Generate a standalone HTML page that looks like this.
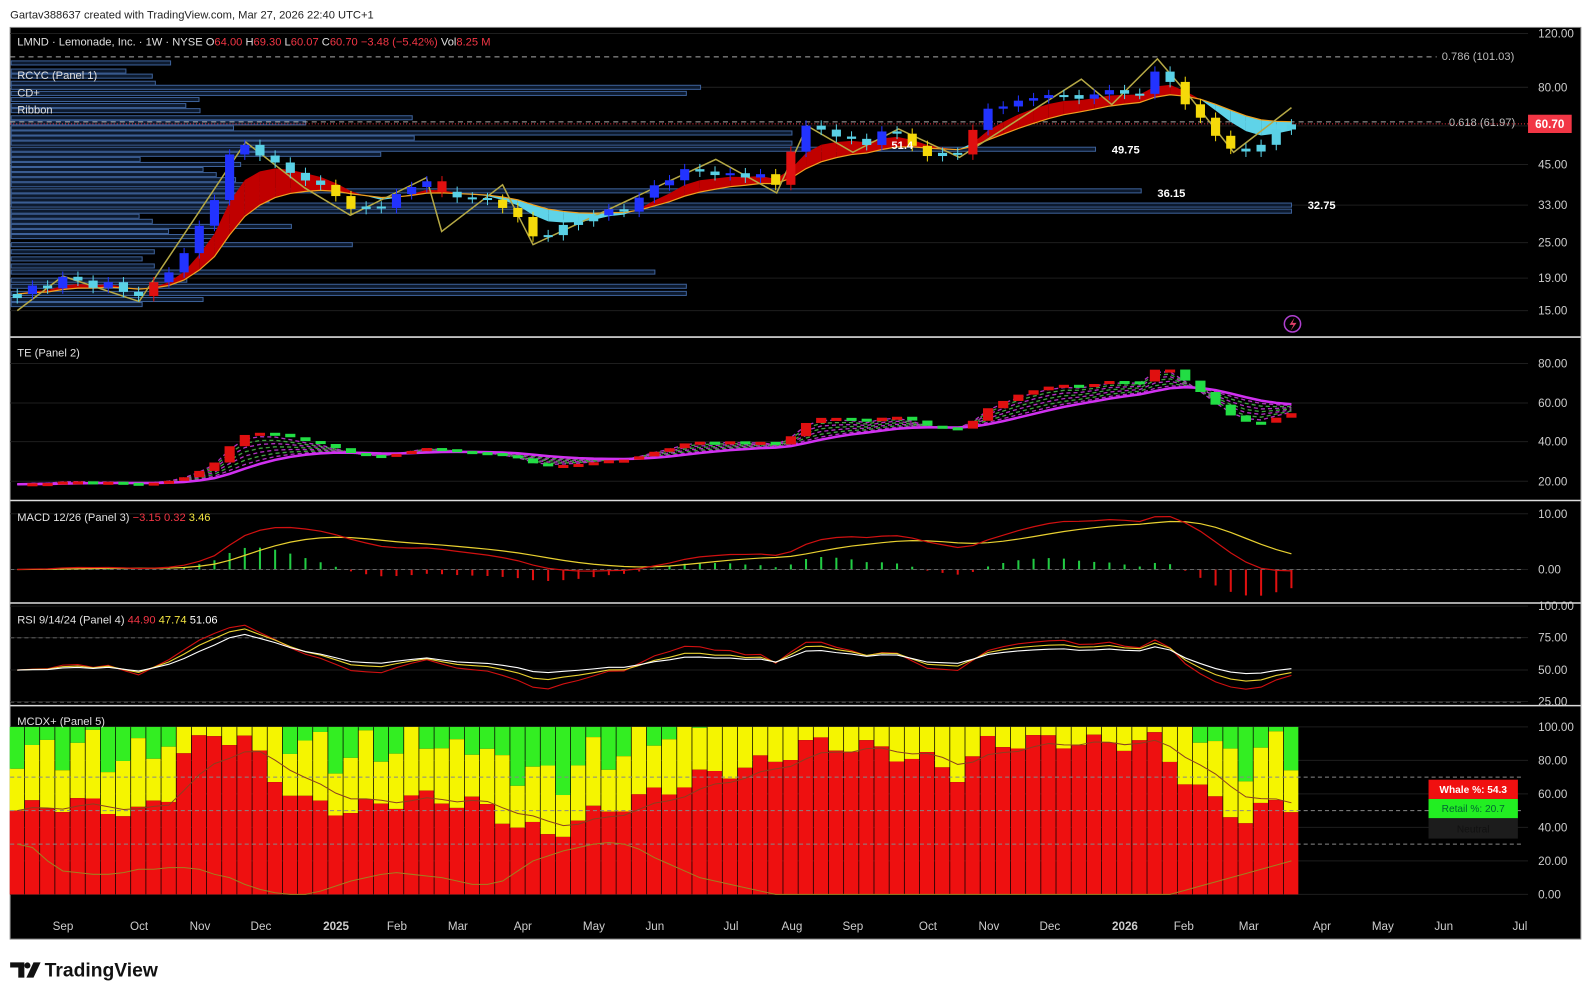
<!DOCTYPE html>
<html><head><meta charset="utf-8"><style>
html,body{margin:0;padding:0;background:#fff;width:1592px;height:1000px;overflow:hidden}
svg{display:block}
text{font-family:"Liberation Sans","DejaVu Sans",sans-serif}
</style></head><body>
<svg id="s" width="1592" height="1000" viewBox="0 0 1568 985" preserveAspectRatio="none" xmlns="http://www.w3.org/2000/svg">
<rect x="0" y="0" width="1568" height="985" fill="#fff"/>
<text x="10" y="18" font-size="11" fill="#222">Gartav388637 created with TradingView.com, Mar 27, 2026 22:40 UTC+1</text>
<rect x="10" y="27" width="1547" height="898" fill="#000" stroke="#888" stroke-width="1"/>
<g id="grid" stroke="#1e1e1e" stroke-width="1"></g>
<g id="vp"></g>
<g id="draw"></g>
<g stroke="#ddd" stroke-width="1.5">
<line x1="10" y1="332" x2="1557" y2="332"/><line x1="10" y1="493" x2="1557" y2="493"/>
<line x1="10" y1="594" x2="1557" y2="594"/><line x1="10" y1="695" x2="1557" y2="695"/>
</g>
<g font-size="11" fill="#e0e0e0">
<text x="17" y="45">LMND · Lemonade, Inc. · 1W · NYSE <tspan>O</tspan><tspan fill="#f23645">64.00</tspan> H<tspan fill="#f23645">69.30</tspan> L<tspan fill="#f23645">60.07</tspan> C<tspan fill="#f23645">60.70</tspan> <tspan fill="#f23645">−3.48 (−5.42%)</tspan> Vol<tspan fill="#f23645">8.25 M</tspan></text>
<text x="17" y="78">RCYC (Panel 1)</text>
<text x="17" y="95">CD+</text>
<text x="17" y="112">Ribbon</text>
<text x="17" y="351">TE  (Panel 2)</text>
<text x="17" y="513">MACD 12/26 (Panel 3) <tspan fill="#f23645">−3.15</tspan> <tspan fill="#f23645">0.32</tspan> <tspan fill="#f5e642">3.46</tspan></text>
<text x="17" y="614">RSI 9/14/24 (Panel 4) <tspan fill="#f23645">44.90</tspan> <tspan fill="#f5e642">47.74</tspan> <tspan fill="#fff">51.06</tspan></text>
<text x="17" y="714">MCDX+ (Panel 5)</text>
</g>
<g font-size="11" fill="#fff" font-weight="bold">
<text x="878" y="147">51.4</text><text x="1095" y="151">49.75</text><text x="1140" y="194">36.15</text><text x="1288" y="206">32.75</text>
</g>
<g font-size="11" fill="#bbb">
<text x="1420" y="59">0.786 (101.03)</text><text x="1427" y="124">0.618 (61.97)</text>
</g>
<rect x="1505" y="113" width="43" height="18" fill="#f23645"/>
<text x="1512" y="126" font-size="11.5" fill="#fff" font-weight="bold">60.70</text>
<g font-size="11.5" fill="#ccc" id="axis">
<text x="1515" y="37">120.00</text><text x="1515" y="90">80.00</text><text x="1515" y="166">45.00</text><text x="1515" y="206">33.00</text><text x="1515" y="243">25.00</text><text x="1515" y="278">19.00</text><text x="1515" y="310">15.00</text>
<text x="1515" y="362">80.00</text><text x="1515" y="401">60.00</text><text x="1515" y="439">40.00</text><text x="1515" y="478">20.00</text>
<text x="1515" y="510">10.00</text><text x="1515" y="565">0.00</text>
<text x="1515" y="601">100.00</text><text x="1515" y="632">75.00</text><text x="1515" y="664">50.00</text><text x="1515" y="695">25.00</text>
<text x="1515" y="720">100.00</text><text x="1515" y="753">80.00</text><text x="1515" y="786">60.00</text><text x="1515" y="819">40.00</text><text x="1515" y="852">20.00</text><text x="1515" y="885">0.00</text>
</g>
<g font-size="11.5" fill="#ccc" text-anchor="middle">
<text x="62" y="916">Sep</text><text x="137" y="916">Oct</text><text x="197" y="916">Nov</text><text x="257" y="916">Dec</text><text x="331" y="916" font-weight="bold">2025</text><text x="391" y="916">Feb</text><text x="451" y="916">Mar</text><text x="515" y="916">Apr</text><text x="585" y="916">May</text><text x="645" y="916">Jun</text><text x="720" y="916">Jul</text><text x="780" y="916">Aug</text><text x="840" y="916">Sep</text><text x="914" y="916">Oct</text><text x="974" y="916">Nov</text><text x="1034" y="916">Dec</text><text x="1108" y="916" font-weight="bold">2026</text><text x="1166" y="916">Feb</text><text x="1230" y="916">Mar</text><text x="1302" y="916">Apr</text><text x="1362" y="916">May</text><text x="1422" y="916">Jun</text><text x="1497" y="916">Jul</text>
</g>
<rect x="1407" y="768" width="88" height="19" fill="#f01010"/>
<rect x="1407" y="787" width="88" height="19" fill="#22ee22"/>
<rect x="1407" y="806" width="88" height="20" fill="#1c1c1c"/>
<text x="1451" y="781" font-size="10" fill="#fff" font-weight="bold" text-anchor="middle">Whale %: 54.3</text>
<text x="1451" y="800" font-size="10" fill="#063" text-anchor="middle">Retail %: 20.7</text>
<text x="1451" y="820" font-size="10" fill="#111" text-anchor="middle">Neutral</text>
<circle cx="1273" cy="319" r="8" fill="none" stroke="#b040d0" stroke-width="1.5"/>
<path d="M1275 313 L1270 320 L1274 320 L1271 326 L1277 318 L1273 318 Z" fill="#e0406a"/>
<g fill="#111">
<path d="M10 948 H24 V963 H18 V953 H10 Z"/>
<circle cx="27" cy="951" r="3"/>
<path d="M33 948 H40 L33 963 H26 Z"/>
</g>
<text x="44" y="962" font-size="19" font-weight="bold" fill="#111">TradingView</text>
</svg>
<script>
(function(){
var kp=[[0,17],[3,19],[6,18],[8,17],[9,18],[11,23],[12,28],[13,35],[14,48],[15,52],[17,45],[19,40],[21,36],[22,32],[24,33],[26,38],[27,40],[28,36],[30,35],[32,33],[33,30],[34,26],[36,28],[38,31],[40,32],[42,38],[44,43],[46,42],[48,41],[49,42],[50,38],[51,50],[52,60],[54,56],[56,52],[57,58],[58,56],[59,52],[60,48],[62,49],[63,58],[64,68],[66,72],[68,76],[70,74],[72,78],[74,76],[75,90],[76,84],[77,70],[78,64],[79,56],[80,50],[81,50],[82,52],[83,58],[84,60.7]];
var N=85,c=[];
for(var i=0;i<N;i++){for(var k=0;k<kp.length-1;k++){if(i>=kp[k][0]&&i<=kp[k+1][0]){var t=(i-kp[k][0])/(kp[k+1][0]-kp[k][0]||1);c[i]=kp[k][1]+(kp[k+1][1]-kp[k][1])*t+Math.sin(i*2.3)*0.6;break;}}}
c[84]=60.7;
function X(i){return 17+i*14.94;}
function pY(p){return 33+(Math.log(120)-Math.log(p))*131.3;}
function ema(a,n){var k=2/(n+1),r=[a[0]];for(var i=1;i<a.length;i++)r[i]=a[i]*k+r[i-1]*(1-k);return r;}
var h='';
var g='';
[33,86,124,162,202,239,274,306,358,397,435,474,506,561,597,628,660,691,716,749,782,815,848,881].forEach(function(y){g+='<line x1="10" y1="'+y+'" x2="1505" y2="'+y+'"/>';});
document.getElementById('grid').innerHTML=g;
var vp=[[62,168],[70,124],[75,150],[82,153],[86,690],[92,676],[98,196],[104,183],[109,197],[116,406],[121,301],[126,230],[131,780],[136,408],[141,780],[147,1079],[152,375],[157,138],[162,237],[167,200],[172,213],[177,232],[182,263],[188,1124],[193,257],[197,265],[202,1272],[208,1272],[213,137],[218,150],[223,287],[228,166],[233,212],[241,347],[248,152],[255,140],[262,152],[268,645],[276,184],[282,676],[289,676],[295,200],[300,140]];
var v='';vp.forEach(function(a){v+='<rect x="11" y="'+(a[0]-2)+'" width="'+(a[1]-11)+'" height="4" fill="#0d1a2e" stroke="#3d6199" stroke-width="1"/>';});
document.getElementById('vp').innerHTML=v;
h+='<line x1="10" y1="56" x2="1415" y2="56" stroke="#aaa" stroke-dasharray="5,4"/>';
h+='<line x1="10" y1="120" x2="1420" y2="120" stroke="#aaa" stroke-dasharray="5,4"/>';
h+='<line x1="10" y1="122" x2="1505" y2="122" stroke="#f23645" stroke-dasharray="1,2"/>';
var f=ema(c,5),sl=ema(c,12);
for(var i=0;i<N-1;i++){var col=f[i]>=sl[i]?'#c00000':'#5fd3e8';
h+='<polygon points="'+X(i)+','+pY(f[i])+' '+X(i+1)+','+pY(f[i+1])+' '+X(i+1)+','+pY(sl[i+1])+' '+X(i)+','+pY(sl[i])+'" fill="'+col+'"/>';}
var pl='';for(i=0;i<N;i++)pl+=X(i)+','+pY(sl[i])+' ';
h+='<polyline points="'+pl+'" fill="none" stroke="#f0a020" stroke-width="1.2"/>';
h+='<polyline points="17,306 62,272 137,297 242,140 300,185 345,212 420,175 435,228 495,182 525,241 705,157 765,190 795,124 840,150 885,127 945,155 1065,78 1095,103 1140,58 1170,93 1215,150 1272,106" fill="none" stroke="#b5a845" stroke-width="1.5"/>';
var e10=ema(c,10);
for(i=0;i<N;i++){var o=i?c[i-1]:c[0]*0.97,cl=c[i];var hi=Math.max(o,cl)*1.04,lo=Math.min(o,cl)*0.96;
var col;if(cl>=o)col=cl>e10[i]?'#2233ff':'#5ad1e6';else col=(cl<e10[i]&&o-cl>2)?'#f5d90a':'#5ad1e6';
if(i==9||i==28||i==51||i==63)col='#e01010';
var y1=pY(Math.max(o,cl)),y2=pY(Math.min(o,cl));if(y2-y1<2)y2=y1+2;
h+='<line x1="'+X(i)+'" y1="'+pY(hi)+'" x2="'+X(i)+'" y2="'+pY(lo)+'" stroke="'+col+'"/>';
h+='<rect x="'+(X(i)-4.5)+'" y="'+y1+'" width="9" height="'+(y2-y1)+'" fill="'+col+'"/>';}
function tY(v){return 473-(v-20)*116/60;}
var te=ema(c.map(function(p){return p*0.88+3;}),3),mg=ema(te,14);
for(var j=1;j<8;j++){var pts='';for(i=0;i<N;i++){pts+=X(i)+','+tY(mg[i]+(te[i]-mg[i])*j/8)+' ';}
h+='<polyline points="'+pts+'" fill="none" stroke="'+(j%2?'#b030c0':'#40a040')+'" stroke-dasharray="4,3" stroke-width="1.3"/>';}
pl='';for(i=0;i<N;i++)pl+=X(i)+','+tY(mg[i])+' ';
h+='<polyline points="'+pl+'" fill="none" stroke="#d030f0" stroke-width="2.5"/>';
for(i=1;i<N;i++){var up=te[i]>=te[i-1];var a=tY(te[i]),b=tY(te[i-1]);var y1=Math.min(a,b),hh=Math.max(3,Math.abs(a-b));
h+='<rect x="'+(X(i)-5)+'" y="'+y1+'" width="10" height="'+hh+'" fill="'+(up?'#e01010':'#22dd44')+'"/>';}
var e12=ema(c,12),e26=ema(c,26),m=[],sg;for(i=0;i<N;i++)m[i]=e12[i]-e26[i];sg=ema(m,9);
function mY(v){return 561-v*5.5;}
for(i=0;i<N;i++){var hv=(m[i]-sg[i])*6;h+='<line x1="'+X(i)+'" y1="561" x2="'+X(i)+'" y2="'+(561-hv)+'" stroke="'+(hv>=0?'#22cc44':'#e01010')+'" stroke-width="2"/>';}
h+='<line x1="10" y1="561" x2="1500" y2="561" stroke="#666" stroke-dasharray="4,3"/>';
pl='';var pl2='';for(i=0;i<N;i++){pl+=X(i)+','+mY(m[i])+' ';pl2+=X(i)+','+mY(sg[i])+' ';}
h+='<polyline points="'+pl2+'" fill="none" stroke="#e8d030" stroke-width="1.2"/><polyline points="'+pl+'" fill="none" stroke="#d01010" stroke-width="1.2"/>';
function rsi(n){var r=[],ag=0.3,al=0.3;for(var i=0;i<N;i++){var d=i?c[i]-c[i-1]:0;ag=(ag*(n-1)+Math.max(d,0))/n;al=(al*(n-1)+Math.max(-d,0))/n;r[i]=100-100/(1+ag/al);if(i<8)r[i]=50+(r[i]-50)*i/8;}return r;}
function rY(v){return 660-(v-50)*1.27;}
h+='<line x1="10" y1="'+rY(75)+'" x2="1500" y2="'+rY(75)+'" stroke="#555" stroke-dasharray="4,3"/>';
h+='<line x1="10" y1="'+rY(25)+'" x2="1500" y2="'+rY(25)+'" stroke="#555" stroke-dasharray="4,3"/>';
[[9,'#d01010'],[14,'#e8d030'],[24,'#fff']].forEach(function(a){var r=ema(rsi(a[0]),2);var p='';for(var i=0;i<N;i++)p+=X(i)+','+rY(r[i]*0.8+10)+' ';h+='<polyline points="'+p+'" fill="none" stroke="'+a[1]+'" stroke-width="1.1"/>';});
var rk=[[0,50],[4,55],[8,48],[10,60],[11,85],[13,95],[15,93],[17,70],[19,55],[22,50],[26,58],[30,55],[33,42],[35,35],[38,48],[42,60],[45,70],[50,80],[52,90],[56,88],[60,80],[62,72],[64,90],[68,92],[72,90],[75,92],[77,70],[79,55],[81,45],[83,55],[84,54]];
function interp(k,i){for(var q=0;q<k.length-1;q++)if(i>=k[q][0]&&i<=k[q+1][0]){var t=(i-k[q][0])/(k[q+1][0]-k[q][0]);return k[q][1]+(k[q+1][1]-k[q][1])*t;}return k[k.length-1][1];}
function zY(v){return 881-v*1.65;}
var rl=[];
for(i=0;i<N;i++){var red=interp(rk,i)+Math.sin(i*1.7)*5;red=Math.max(10,Math.min(97,red));var yel=Math.min(100,red+25+((i*7)%3)*8);if(red>80)yel=100;rl[i]=red;
var x0=X(i)-7.4;
h+='<rect x="'+x0+'" y="'+zY(100)+'" width="14.2" height="'+(zY(yel)-zY(100))+'" fill="#33ee22"/>';
h+='<rect x="'+x0+'" y="'+zY(yel)+'" width="14.2" height="'+(zY(red)-zY(yel))+'" fill="#f5f500"/>';
h+='<rect x="'+x0+'" y="'+zY(red)+'" width="14.2" height="'+(881-zY(red))+'" fill="#ee1010"/>';}
[70,50,30].forEach(function(v){h+='<line x1="10" y1="'+zY(v)+'" x2="1500" y2="'+zY(v)+'" stroke="#888" stroke-dasharray="4,3"/>';});
var ra=ema(rl,6);pl='';pl2='';var ret=[30,28,20,14,13,12,12,13,15,15,16,16,15,12,10,6,3,1,0,0,2,5,8,10,12,13,12,11,10,8,6,6,8,14,20,23,26,28,30,31,30,27,22,18,14,10,8,6,4,2];
for(i=0;i<N;i++){pl+=X(i)+','+zY(ra[i])+' ';pl2+=X(i)+','+zY(i<ret.length?ret[i]:(i>76?(i-76)*2.5:0))+' ';}
h+='<polyline points="'+pl+'" fill="none" stroke="#8a4020" stroke-width="1"/><polyline points="'+pl2+'" fill="none" stroke="#a08020" stroke-width="1"/>';
document.getElementById('draw').innerHTML=h;
})();
</script>
</body></html>
